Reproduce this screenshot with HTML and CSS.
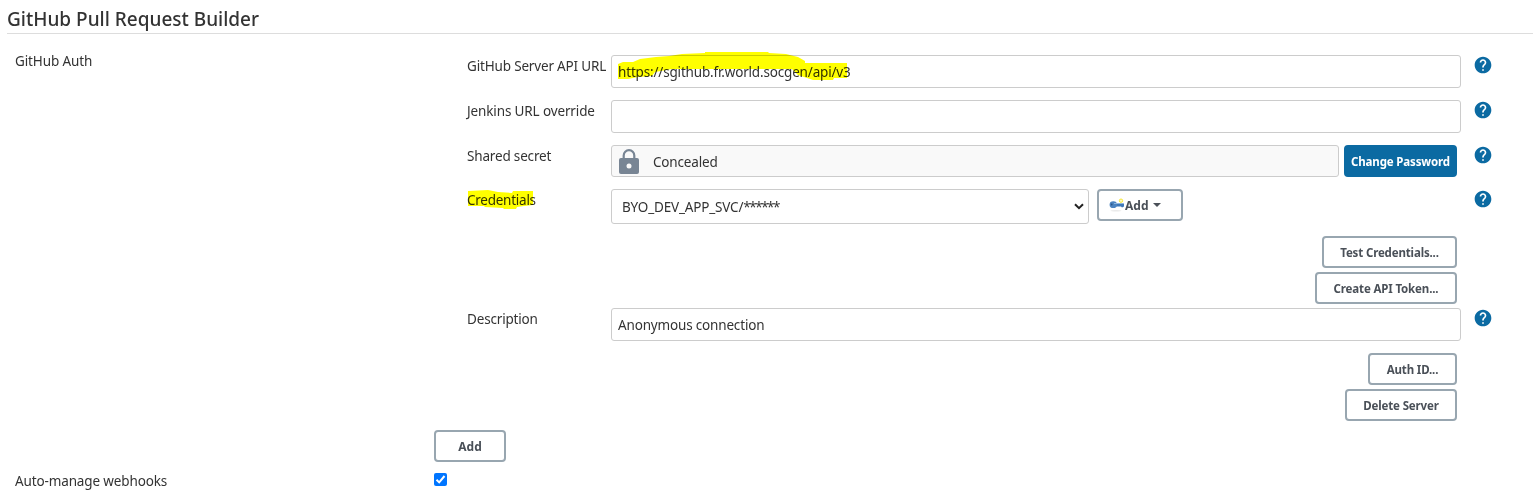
FILE: index.html
```html
<!DOCTYPE html>
<html lang="en">
<head>
<meta charset="utf-8">
<title>GitHub Pull Request Builder</title>
<link rel="stylesheet" href="styles.css">
</head>
<body>
<svg class="defs" aria-hidden="true"><symbol id="help" viewBox="0 0 24 24"><path fill="currentColor" d="M12 2C6.48 2 2 6.48 2 12s4.480 10 10 10 10-4.480 10-10S17.520 2 12 2zm1 17h-2v-2h2v2zm2.070-7.750-.9.920C13.450 12.900 13 13.500 13 15h-2v-.5c0-1.100.45-2.100 1.170-2.830l1.240-1.260c.37-.36.590-.86.590-1.410 0-1.100-.9-2-2-2s-2 .9-2 2H8c0-2.210 1.790-4 4-4s4 1.790 4 4c0 .88-.36 1.680-.93 2.250z"/></symbol></svg>
<h1 class="title">GitHub Pull Request Builder</h1>
<main class="config">
  <div class="side">GitHub Auth</div>
  <div class="servers">
    <div class="row">
      <label class="label">GitHub Server API URL</label>
      <div class="field marked">
        <svg class="marker" width="240" height="31" viewBox="0 0 240 31"><path d="M0 12L5 10 15 10 22 7 38 5 51 4 64 2 87 1 87 0 150 0 151 1 168 2 180 5 187 9 187 11 229 11 229 26 216 26 215 28 195 28 180 23 174 17 54 17 37 20 34 24 20 25 10 27 0 27Z"/></svg>
        <div class="input">https://sgithub.fr.world.socgen/api/v3</div>
      </div>
      <svg class="help"><use href="#help"/></svg>
    </div>
    <div class="row">
      <label class="label jenkins">Jenkins URL override</label>
      <div class="field"><div class="input"></div></div>
      <svg class="help"><use href="#help"/></svg>
    </div>
    <div class="row row-secret">
      <label class="label">Shared secret</label>
      <div class="field secret">
        <div class="concealed">
          <svg class="lock" width="20" height="26" viewBox="0 0 20 26"><path d="M4.700 11V6.500a5.300 5.300 0 0 1 10.600 0V11" fill="none" stroke="#788594" stroke-width="2.200"/><rect x="0" y="9" width="20" height="16" rx="2" fill="#788594"/><circle cx="10" cy="17" r="2.500" fill="#f9f9f9"/></svg>
          <span>Concealed</span>
        </div>
        <button class="btn primary">Change Password</button>
      </div>
      <svg class="help"><use href="#help"/></svg>
    </div>
    <div class="row row-cred">
      <label class="label marked cred"><svg class="marker marker-cred" width="68" height="20" viewBox="0 0 68 20"><path d="M1 2L21 1 31 3 45 4 46 2 66 2 66 16 57 17 50 18 49 20 37 20 36 19 18 18 17 17 1 17Z"/></svg>Credentials</label>
      <div class="field creds">
        <div class="select"><span class="value">BYO_DEV_APP_SVC/<span class="stars">******</span></span><svg width="10" height="7" viewBox="0 0 10 7"><path d="M1 1.200L5 5.200 9 1.200" fill="none" stroke="#222" stroke-width="2"/></svg></div>
        <button class="btn add-key">
          <svg class="key" width="16" height="14" viewBox="0 0 16 14"><ellipse cx="7" cy="12.800" rx="5.500" ry=".7" fill="#eaeaea"/><path d="M6 5h8l1 1v2.500l-2 1-1-1H6Z" fill="#3f78b8"/><ellipse cx="4.300" cy="6.700" rx="3.700" ry="3.400" fill="#4b83bf"/><path d="M5 5.500h9" stroke="#8eb6dd"/><circle cx="2.700" cy="6.500" r=".9" fill="#2b5585"/><circle cx="12" cy="2.700" r="1.700" fill="#fffbc0" stroke="#f7e93a"/></svg>
          <span class="add-text">Add</span><i class="caret"></i>
        </button>
      </div>
      <svg class="help"><use href="#help"/></svg>
    </div>
    <div class="actions"><button class="btn test">Test Credentials...</button><button class="btn create">Create API Token...</button></div>
    <div class="row">
      <label class="label">Description</label>
      <div class="field"><div class="input">Anonymous connection</div></div>
      <svg class="help"><use href="#help"/></svg>
    </div>
    <div class="actions"><button class="btn auth-id">Auth ID...</button><button class="btn delete">Delete Server</button></div>
    <button class="btn add">Add</button>
  </div>
  <div class="side auto">Auto-manage webhooks</div>
  <div class="check"><svg width="13" height="13" viewBox="0 0 13 13"><rect width="13" height="13" rx="2" fill="#0075ff"/><path d="M2.500 6.800L5.200 9.400 10.500 3" fill="none" stroke="#fff" stroke-width="2"/></svg></div>
</main>
</body>
</html>
```
FILE: styles.css
```css
* { box-sizing: border-box; }
body { margin: 0; height: 498px; overflow: hidden; background: #fff; color: #333; font: 13.500px/20px "Noto Sans", "Open Sans", sans-serif; letter-spacing: -.17px; }
.defs { position: absolute; width: 0; height: 0; }
.title { margin: 0 7px; height: 34px; padding-top: 6px; border-bottom: 1px solid #ddd; font-size: 19px; line-height: 26px; font-weight: 500; letter-spacing: 0; }
.config { display: grid; grid-template-columns: 419px 1fr; padding: 21px 0 0 15px; }
.side { line-height: 13px; letter-spacing: -.13px; }
.row { display: grid; grid-template-columns: 144px 850px 1fr; height: 45px; padding-left: 33px; }
.row-secret { height: 44px; }
.row-cred { height: 47px; }
.label { line-height: 23px; white-space: nowrap; }
.jenkins { letter-spacing: -.13px; }
.cred { letter-spacing: -.25px; }
.field { height: 33px; }
.input { height: 33px; padding: 6px; border: 1px solid #ccc; border-radius: 3px; line-height: 21px; }
.marked { position: relative; }
.marker { position: absolute; left: 7px; top: -3px; mix-blend-mode: multiply; fill: #ff0; }
.marker-cred { left: 0; top: 0; }
.help { width: 20px; height: 20px; margin-left: 12px; color: #0b6aa2; }
.secret { display: flex; gap: 5px; height: 32px; }
.concealed { display: flex; width: 728px; height: 32px; padding: 3px 7px; gap: 14px; border: 1px solid #ccc; border-radius: 3px; background: #f9f9f9; line-height: 27px; }
.creds { display: flex; gap: 8px; height: 35px; }
.select { display: flex; justify-content: space-between; align-items: center; width: 478px; height: 35px; padding: 0 4px 0 10px; border: 1px solid #ccc; border-radius: 3px; }
.value { letter-spacing: -.17px; }
.stars { letter-spacing: -1.5px; }
.btn { display: inline-flex; align-items: center; justify-content: center; height: 32px; padding: 2px 0 0; border: 2px solid #98a6b0; border-radius: 4px; background: #fff; color: #4a5058; font: 700 11.500px/16px "Noto Sans", "Open Sans", sans-serif; letter-spacing: -.15px; white-space: nowrap; }
.primary { width: 113px; border-color: #0b6aa2; background: #0b6aa2; color: #fff; }
.add-key { width: 86px; padding: 1px 10px 0; justify-content: flex-start; font-size: 12px; letter-spacing: 0; }
.key { flex: none; margin-top: -2px; }
.caret { margin: -1px 0 0 5px; border: 4px solid transparent; border-top-color: #4a5058; border-bottom: 0; }
.actions { display: flex; flex-direction: column; align-items: flex-end; gap: 4px; width: 1023px; margin-bottom: 4px; }
.test { width: 135px; }
.create { width: 142px; }
.auth-id { width: 89px; }
.delete { width: 112px; }
.add { width: 72px; margin-top: 5px; font-size: 12px; letter-spacing: 0; }
.auto { padding-top: 13px; }
.check { padding-top: 11px; line-height: 0; }
```
